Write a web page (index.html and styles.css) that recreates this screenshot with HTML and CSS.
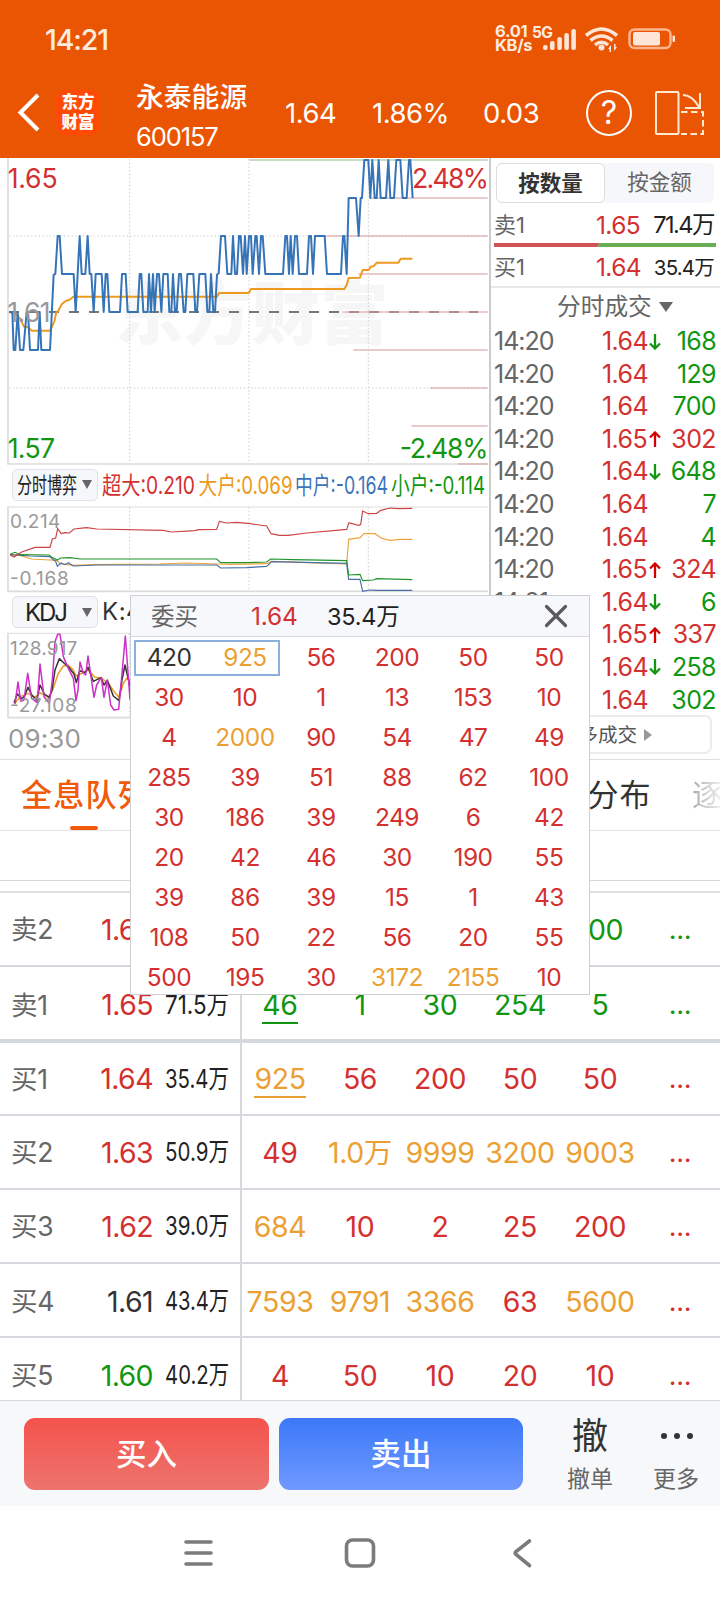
FILE: index.html
```html
<!DOCTYPE html>
<html lang="zh-CN">
<head>
<meta charset="utf-8">
<title>永泰能源 600157</title>
<link rel="stylesheet" href="styles.css">
</head>
<body>
<div class="app">
  <header class="top">
    <div class="status">
      <span class="clock">14:21</span>
      <div class="net"><span>6.01</span><span>KB/s</span></div>
      <span class="gen">5G</span>
      <svg class="status-icons" width="134" height="32" viewBox="542 24 134 32" fill="#fde6d8">
        <rect x="543" y="45" width="4.6" height="5" rx="2"/><rect x="550" y="41" width="4.6" height="9" rx="2"/><rect x="557.300" y="37" width="4.600" height="13" rx="2"/><rect x="564.300" y="33" width="4.600" height="17" rx="2"/><rect x="571.300" y="29" width="4.600" height="21" rx="2"/>
        <g fill="none" stroke="#fde6d8" stroke-width="3.600"><path d="M586 35.500Q601.500 22.500 617 35.500"/><path d="M590.500 40.500Q601.500 31.500 612.500 40.500"/><path d="M595 45Q601.500 39.500 608 45"/></g>
        <circle cx="601.500" cy="47.500" r="3"/>
        <path d="M608 49l3-4v7h-1.500v-3zM617 47l-3 4v-7h1.500v3z"/>
        <rect x="629.500" y="29.500" width="41" height="18.500" rx="5" fill="none" stroke="#fbb48c" stroke-width="2.500"/>
        <rect x="633" y="32" width="27" height="13.500" rx="2"/><rect x="672.500" y="35.500" width="2.500" height="6.500" rx="1"/>
      </svg>
    </div>
    <div class="title">
      <svg class="back" width="24" height="40" viewBox="0 0 24 40"><path d="M21 3L3.500 20.500 21 38" fill="none" stroke="#fff" stroke-width="4"/></svg>
      <div class="logo"><span>东方</span><span>财富</span></div>
      <div class="stock"><span class="name">永泰能源</span><span class="code">600157</span></div>
      <span class="q q1">1.64</span><span class="q q2">1.86%</span><span class="q q3">0.03</span>
      <div class="help">?</div>
      <svg class="rotate" width="50" height="48" viewBox="654 89 50 48" fill="none" stroke="#ffe9cf" stroke-width="2">
        <rect x="656" y="92" width="22.500" height="42" rx="1"/><path d="M683 95Q692 95 699 107"/><path d="M700 93v15H685"/>
        <path d="M681 112h22v22H681" stroke-dasharray="6.500 3.500"/>
      </svg>
    </div>
  </header>

  <main class="market">
    <section class="charts">
      <svg class="chart" width="489" height="308" viewBox="0 24 1467 924">
        <g class="mark"><text x="345" y="568" textLength="820">东方财富</text></g>
        <g class="dots"><path d="M27 258H1464M27 714H1464"/><path d="M389 27V940M747 27V940M1105 27V940"/></g>
        <path class="frame" d="M24 24V942H1464"/>
        <path class="axis" d="M27 486H1434" stroke-dasharray="30 30"/>
        <g class="levels"><path d="M1108 144H1463M974 258H1463M1075 372H1463M1028 486H1463M1060 600H1463M1290 714H1463M1234 828H1463M1374 942H1463"/></g>
        <path class="top-level" d="M747 30H1463"/>
        <polyline class="ln avg" points="27,486 45,490 60,505 72,530 85,532 95,542 150,542 163,515 168,490 175,482 185,463 198,452 208,450 220,440 651,440 657,429 746,429 753,417 1033,417 1040,405 1046,384 1080,383 1088,360 1106,360 1112,350 1122,348 1130,338 1195,338 1202,326 1237,326"/>
        <polyline class="ln price" points="27,486 37,486 41,600 46,600 53,486 60,600 70,600 80,486 84,486 90,600 114,600 119,486 124,600 150,600 161,374 166,372 173,258 179,258 186,372 221,372 227,486 239,258 245,372 256,372 263,258 269,372 274,372 281,486 287,372 305,372 311,486 317,372 322,372 328,486 360,486 366,372 377,372 383,486 413,486 419,372 424,372 430,486 443,486 447,372 453,486 459,372 464,486 471,372 477,372 484,486 490,372 503,372 508,486 514,486 519,372 525,486 530,486 537,372 543,372 551,486 556,486 562,372 580,372 586,486 591,486 598,372 616,372 622,486 628,486 633,372 640,486 645,486 651,374 656,370 663,258 675,258 682,372 694,372 699,258 705,372 711,372 717,258 722,258 729,372 735,258 740,372 747,258 753,258 758,372 766,258 770,258 777,372 783,258 788,258 796,372 849,372 856,258 861,258 867,372 872,258 878,372 885,258 891,258 897,372 921,372 927,258 933,258 939,372 945,258 974,258 981,372 1023,372 1029,258 1033,258 1040,372 1046,144 1068,144 1076,258 1082,144 1086,144 1093,30 1105,30 1111,144 1117,30 1124,144 1130,144 1136,30 1142,144 1158,144 1165,30 1171,144 1182,144 1189,30 1201,30 1208,144 1220,144 1227,30 1231,30 1238,144"/>
        <g class="big-label">
          <text class="red" x="23" y="113" textLength="150">1.65</text><text class="grey" x="22" y="515" textLength="130">1.61</text><text class="green" x="23" y="923" textLength="142">1.57</text>
          <text class="red" x="1236" y="113" textLength="231">2.48%</text><text class="green" x="1199" y="923" textLength="266">-2.48%</text>
        </g>
      </svg>
      <div class="tools">
        <div class="pick"><svg width="86" height="32" viewBox="12 469 86 32"><text x="17" y="493" textLength="60" lengthAdjust="spacingAndGlyphs">分时博弈</text><path d="M82 480h10l-5 9z"/></svg></div>
        <svg class="legend" width="386" height="32" viewBox="101 469 386 32">
          <text class="red" x="102" y="494" textLength="93" lengthAdjust="spacingAndGlyphs">超大:0.210</text>
          <text class="orange" x="198.500" y="494" textLength="94" lengthAdjust="spacingAndGlyphs">大户:0.069</text>
          <text class="blue" x="295" y="494" textLength="93" lengthAdjust="spacingAndGlyphs">中户:-0.164</text>
          <text class="green" x="391" y="494" textLength="94" lengthAdjust="spacingAndGlyphs">小户:-0.114</text>
        </svg>
      </div>
      <svg class="chart" width="489" height="87" viewBox="0 137 1467 261">
        <path class="frame thin" d="M24 140H1464"/><path class="frame" d="M24 138V393H1464"/>
        <g class="dots"><path d="M389 140V392M747 140V392M1105 140V392"/></g>
        <g class="small-label"><text x="30" y="203" textLength="151">0.214</text><text x="30" y="375" textLength="176">-0.168</text></g>
        <polyline class="hair s-orange" points="30,283 60,285 95,296 150,299 172,301 180,310 220,315 280,313 480,311 560,308 650,311 690,312 800,310 815,303 900,306 1040,311 1046,237 1080,232 1092,220 1125,220 1145,234 1170,240 1200,237 1237,237"/>
        <polyline class="hair s-blue" points="30,283 90,287 150,289 158,297 167,303 172,318 183,308 195,313 205,307 220,317 290,314 650,314 662,323 740,322 800,318 815,304 1040,309 1046,357 1080,357 1088,393 1110,389 1130,390 1237,390"/>
        <polyline class="hair s-green" points="30,282 45,276 60,283 148,284 156,291 172,299 182,293 210,292 240,296 650,296 662,307 735,307 800,305 812,296 880,298 1040,301 1046,344 1080,342 1088,361 1120,359 1130,355 1237,358"/>
        <polyline class="hair s-red" points="30,283 42,290 65,275 105,261 150,261 157,236 167,233 173,205 184,220 195,217 208,218 222,206 260,202 290,206 490,210 515,215 585,211 595,208 650,207 658,183 680,188 710,186 750,190 800,197 813,220 838,225 865,225 920,218 1040,207 1047,187 1075,195 1082,193 1088,152 1105,160 1130,159 1142,150 1170,143 1195,145 1237,144"/>
      </svg>
      <div class="tools second">
        <div class="pick kdj"><svg width="86" height="32" viewBox="12 596 86 32"><text x="25" y="621" textLength="43">KDJ</text><path d="M82 608h10l-5 9z"/></svg></div>
        <span class="kval">K:48.5</span>
      </div>
      <svg class="chart" width="489" height="88" viewBox="0 516 1467 264">
        <path class="frame thin" d="M24 520H1464"/><path class="frame" d="M24 518V773H1464"/>
        <g class="dots"><path d="M389 520V772"/></g>
        <polyline class="ln k1" points="45,730 60,710 85,700 105,712 120,698 145,712 158,690 175,640 190,618 205,616 220,630 228,648 240,642 265,630 285,652 305,655 325,670 345,698 357,712 370,670 380,655 391,662"/>
        <polyline class="ln k2" points="42,728 52,702 65,716 74,708 84,682 96,706 110,720 120,675 133,702 148,712 156,690 165,630 178,596 195,612 205,620 222,642 229,668 239,632 256,638 264,622 280,664 303,653 312,675 322,661 340,708 357,722 366,660 375,615 390,680"/>
        <polyline class="ln k3" points="45,732 54,666 62,724 72,720 83,640 95,715 112,728 120,612 132,710 148,730 157,660 165,545 173,523 180,523 190,590 205,625 220,655 228,722 234,690 240,606 250,640 257,645 264,588 282,712 290,675 304,652 312,712 322,660 332,735 342,750 356,748 366,640 376,528 390,718"/>
        <g class="small-label"><text x="30" y="584" textLength="202">128.917</text><text x="30" y="755" textLength="200">-27.108</text></g>
      </svg>
      <div class="start">09:30</div>
    </section>

    <aside class="side">
      <div class="switch"><span class="on">按数量</span><span>按金额</span></div>
      <div class="quote"><span class="lb">卖1</span><span class="pr">1.65</span><span class="vl">71.4万</span></div>
      <svg class="ratio" width="222" height="5"><path d="M0 0h106l-3 4H0z" fill="#d05353"/><path d="M106 0h116v4H103z" fill="#68ae55"/></svg>
      <div class="quote bid"><span class="lb">买1</span><span class="pr">1.64</span><span class="vl sm">35.4万</span></div>
      <div class="ticks-head">分时成交<i class="tri"></i></div>
      <div class="ticks">
        <div class="tick"><span>14:20</span><b>1.64</b><svg viewBox="0 0 12 16"><path class="dn" d="M6 0v14.500M1 9.500L6 14.500l5-5"/></svg><em class="green">168</em></div>
        <div class="tick"><span>14:20</span><b>1.64</b><em class="green">129</em></div>
        <div class="tick"><span>14:20</span><b>1.64</b><em class="green">700</em></div>
        <div class="tick"><span>14:20</span><b>1.65</b><svg viewBox="0 0 12 16"><path class="up" d="M6 16V1.500M1 6.500L6 1.500l5 5"/></svg><em class="red">302</em></div>
        <div class="tick"><span>14:20</span><b>1.64</b><svg viewBox="0 0 12 16"><path class="dn" d="M6 0v14.500M1 9.500L6 14.500l5-5"/></svg><em class="green">648</em></div>
        <div class="tick"><span>14:20</span><b>1.64</b><em class="green">7</em></div>
        <div class="tick"><span>14:20</span><b>1.64</b><em class="green">4</em></div>
        <div class="tick"><span>14:20</span><b>1.65</b><svg viewBox="0 0 12 16"><path class="up" d="M6 16V1.500M1 6.500L6 1.500l5 5"/></svg><em class="red">324</em></div>
        <div class="tick"><span>14:21</span><b>1.64</b><svg viewBox="0 0 12 16"><path class="dn" d="M6 0v14.500M1 9.500L6 14.500l5-5"/></svg><em class="green">6</em></div>
        <div class="tick"><span>14:21</span><b>1.65</b><svg viewBox="0 0 12 16"><path class="up" d="M6 16V1.500M1 6.500L6 1.500l5 5"/></svg><em class="red">337</em></div>
        <div class="tick"><span>14:21</span><b>1.64</b><svg viewBox="0 0 12 16"><path class="dn" d="M6 0v14.500M1 9.500L6 14.500l5-5"/></svg><em class="green">258</em></div>
        <div class="tick"><span>14:21</span><b>1.64</b><em class="green">302</em></div>
      </div>
      <div class="more-ticks">更多成交<i class="tri-r"></i></div>
    </aside>
  </main>

  <nav class="tabs"><span class="tab active">全息队列</span><span class="tab mid">成交分布</span><span class="tab last">逐</span></nav>
  <div class="gap-a"></div>
  <div class="gap-b"></div>

  <section class="book">
    <div class="row"><span class="lb">卖2</span><span class="pr red">1.66</span><span class="vo"></span><div class="cells green"><i></i><i></i><i></i><i></i><i>100</i><i class="el">...</i></div></div>
    <div class="row thick"><span class="lb">卖1</span><span class="pr red">1.65</span><svg class="vo"><text x="0" y="23" textLength="64" lengthAdjust="spacingAndGlyphs">71.5万</text></svg><div class="cells green"><i><u>46</u></i><i>1</i><i>30</i><i>254</i><i>5</i><i class="el">...</i></div></div>
    <div class="row first-bid"><span class="lb">买1</span><span class="pr red">1.64</span><svg class="vo"><text x="0" y="23" textLength="64" lengthAdjust="spacingAndGlyphs">35.4万</text></svg><div class="cells red"><i class="amber"><u>925</u></i><i>56</i><i>200</i><i>50</i><i>50</i><i class="el">...</i></div></div>
    <div class="row"><span class="lb">买2</span><span class="pr red">1.63</span><svg class="vo"><text x="0" y="23" textLength="64" lengthAdjust="spacingAndGlyphs">50.9万</text></svg><div class="cells red"><i>49</i><i class="amber">1.0万</i><i class="amber">9999</i><i class="amber">3200</i><i class="amber">9003</i><i class="el">...</i></div></div>
    <div class="row"><span class="lb">买3</span><span class="pr red">1.62</span><svg class="vo"><text x="0" y="23" textLength="64" lengthAdjust="spacingAndGlyphs">39.0万</text></svg><div class="cells red"><i class="amber">684</i><i>10</i><i>2</i><i>25</i><i>200</i><i class="el">...</i></div></div>
    <div class="row low"><span class="lb">买4</span><span class="pr">1.61</span><svg class="vo"><text x="0" y="23" textLength="64" lengthAdjust="spacingAndGlyphs">43.4万</text></svg><div class="cells red"><i class="amber">7593</i><i class="amber">9791</i><i class="amber">3366</i><i>63</i><i class="amber">5600</i><i class="el">...</i></div></div>
    <div class="row low"><span class="lb">买5</span><span class="pr green">1.60</span><svg class="vo"><text x="0" y="23" textLength="64" lengthAdjust="spacingAndGlyphs">40.2万</text></svg><div class="cells red"><i>4</i><i>50</i><i>10</i><i>20</i><i>10</i><i class="el">...</i></div></div>
  </section>

  <footer class="actions">
    <button class="buy">买入</button><button class="sell">卖出</button>
    <div class="act cancel"><span class="glyph">撤</span><span>撤单</span></div>
    <div class="act other"><svg width="34" height="40" viewBox="0 0 34 40" fill="#333"><circle cx="5" cy="20" r="3"/><circle cx="18" cy="20" r="3"/><circle cx="31" cy="20" r="3"/></svg><span>更多</span></div>
  </footer>
  <div class="sysnav">
    <svg width="720" height="94" viewBox="0 1506 720 94" fill="none" stroke="#7b7b7b" stroke-width="3.600" stroke-linecap="round">
      <path d="M186 1542h25M186 1553h25M186 1564h25"/><rect x="346.500" y="1540" width="27" height="26" rx="6"/><path d="M529.500 1541L516 1551.500Q514.500 1553 516 1554.500L529.500 1565.500"/>
    </svg>
  </div>

  <div class="popup">
    <div class="pop-head"><span class="side-name">委买</span><span class="pop-price">1.64</span><span class="pop-vol">35.4万</span>
      <svg width="24" height="24" viewBox="0 0 24 24"><path d="M2.500 2.500l19 19M21.500 2.500l-19 19" stroke="#5a5a5a" stroke-width="3.200" stroke-linecap="round"/></svg></div>
    <div class="grid">
      <span class="dark">420</span><span class="amber">925</span><span>56</span><span>200</span><span>50</span><span>50</span>
      <span>30</span><span>10</span><span>1</span><span>13</span><span>153</span><span>10</span>
      <span>4</span><span class="amber">2000</span><span>90</span><span>54</span><span>47</span><span>49</span>
      <span>285</span><span>39</span><span>51</span><span>88</span><span>62</span><span>100</span>
      <span>30</span><span>186</span><span>39</span><span>249</span><span>6</span><span>42</span>
      <span>20</span><span>42</span><span>46</span><span>30</span><span>190</span><span>55</span>
      <span>39</span><span>86</span><span>39</span><span>15</span><span>1</span><span>43</span>
      <span>108</span><span>50</span><span>22</span><span>56</span><span>20</span><span>55</span>
      <span>500</span><span>195</span><span>30</span><span class="amber">3172</span><span class="amber">2155</span><span>10</span>
    </div>
    <div class="selected"></div>
  </div>
</div>
</body>
</html>
```
FILE: styles.css
```css
* { box-sizing: border-box; }
body { margin: 0; background: #fff; }
.app { position: relative; width: 720px; height: 1600px; overflow: hidden; display: flex; flex-direction: column; font-family: Inter, "Noto Sans CJK SC", sans-serif; color: #333; background: #fff; }
svg { display: block; flex: none; }
span, i, b, em { font-style: normal; white-space: nowrap; }
.red { color: #d33030; fill: #d33030; }
.green { color: #119611; fill: #119611; }
.orange { fill: #ec9a20; }
.blue { fill: #3b74b9; }
.grey { fill: #999; }

.top { height: 158px; flex: none; background: #ea5504; color: #fff; }
.status { height: 76px; display: flex; padding: 24px 0 0 45px; color: #fdeadf; }
.clock { width: 450px; font-size: 28.500px; line-height: 31px; font-weight: 500; letter-spacing: -1.100px; }
.net { width: 37px; display: flex; flex-direction: column; font-size: 16.500px; line-height: 14px; font-weight: 700; letter-spacing: -.3px; }
.gen { width: 10px; font-size: 15.500px; line-height: 17px; font-weight: 700; letter-spacing: -.7px; }
.title { height: 82px; display: flex; align-items: flex-start; }
.back { margin: 16px 0 0 17px; }
.logo { width: 44px; height: 45px; margin: 14px 0 0 15px; border-radius: 9px; background: #ff4a05; display: flex; flex-direction: column; align-items: center; padding-top: 2px; font-size: 16.500px; line-height: 20px; font-weight: 900; }
.stock { width: 149px; margin-left: 36px; padding-top: 1px; display: flex; flex-direction: column; }
.name { font-size: 27.800px; line-height: 40px; font-weight: 500; }
.code { font-size: 25.500px; line-height: 39px; letter-spacing: -1.100px; }
.q { font-size: 27.500px; line-height: 75px; letter-spacing: -.5px; }
.q1 { width: 87px; } .q2 { width: 111px; } .q3 { width: 103px; }
.help { width: 46px; height: 46px; margin: 14px 22px 0 0; border: 2px solid #fff; border-radius: 50%; font-size: 32px; line-height: 42px; text-align: center; }
.rotate { margin-top: 13px; }

.market { display: flex; height: 602px; flex: none; border-bottom: 1px solid #dedfe1; }
.charts { width: 489px; flex: none; }
.dots path { fill: none; stroke: #d2d2d2; stroke-width: 3; stroke-dasharray: 5 6; }
.frame { fill: none; stroke: #dcdcdc; stroke-width: 5; }
.frame.thin { stroke-width: 3; }
.axis { stroke: #777; stroke-width: 6; }
.levels path { stroke: #d9a0a0; stroke-opacity: .55; stroke-width: 6; }
.top-level { stroke: #c5dfc5; stroke-width: 6; }
.ln { fill: none; stroke-width: 6; stroke-linejoin: round; }
.avg, .k1 { stroke: #ec9a20; }
.price { stroke: #3674b8; }
.k1, .k2, .k3 { stroke-width: 4.500; }
.k2 { stroke: #333; } .k3 { stroke: #cc30c8; }
.hair { fill: none; stroke-width: 3.500; }
.s-red { stroke: #cc4444; } .s-orange { stroke: #eea43c; } .s-green { stroke: #21952c; } .s-blue { stroke: #4770a5; }
.mark text { font-size: 205px; font-weight: 900; fill: #f6f6f6; }
.big-label text { font-size: 80px; }
.small-label text { font-size: 57px; fill: #999; }
.tools { height: 40px; display: flex; padding: 3px 0 0 12px; }
.tools.second { height: 39px; }
.pick { width: 86px; height: 32px; border: 1px solid #dfe2e6; border-radius: 5px; background: #f5f7fa; flex: none; }
.pick svg { margin: -1px; fill: #222; }
.pick text { font-size: 22px; }
.pick.kdj text { font-size: 24px; }
.pick path { fill: #666; }
.legend { margin-left: 3px; font-size: 24px; overflow: visible; }
.kval { margin-left: 4px; font-size: 24px; line-height: 32px; letter-spacing: .5px; }
.start { padding-left: 8px; font-size: 26px; line-height: 37px; color: #999; letter-spacing: .1px; }

.side { width: 231px; border-left: 2px solid #ccc; padding-left: 3px; }
.switch { width: 218px; height: 40px; margin: 5px 0 0 2px; display: grid; grid-template-columns: 109px 109px; background: #f6f7fa; border-radius: 6px; font-size: 21.500px; line-height: 38px; text-align: center; color: #666; }
.switch .on { background: #fff; border: 1px solid #ddd; border-radius: 6px; font-weight: 700; color: #333; }
.quote { height: 40px; display: flex; align-items: center; line-height: 40px; padding-top: 3px; }
.quote .lb { width: 102px; font-size: 22px; color: #666; }
.quote .pr { width: 54px; font-size: 24.500px; letter-spacing: -.6px; color: #d33030; }
.quote .vl { width: 64px; font-size: 23.500px; letter-spacing: -1.500px; text-align: right; color: #222; }
.quote .vl.sm { font-size: 20.500px; letter-spacing: -.8px; }
.quote.bid { height: 38px; line-height: 35px; align-items: flex-start; padding-top: 2px; }
.ticks-head { height: 39px; margin-left: -3px; border-top: 2px solid #e7e7e9; display: flex; align-items: center; padding-left: 66px; font-size: 23.700px; line-height: 34px; color: #666; }
.tri { margin-left: 7px; border: 7px solid transparent; border-top: 10px solid #666; border-bottom: 0; }
.tick { height: 32.600px; display: grid; grid-template-columns: 108px 47px 14px 53px; align-items: center; font-size: 25px; line-height: 33px; }
.tick span { letter-spacing: -1px; color: #666; }
.tick b { font-weight: 400; letter-spacing: -.6px; color: #d33030; }
.tick svg { width: 12px; height: 16px; fill: none; stroke-width: 2.300; }
.tick em { grid-column: 4; text-align: right; letter-spacing: -.6px; }
.dn { stroke: #119611; } .up { stroke: #d20000; }
.more-ticks { width: 218px; height: 39px; margin-top: -1px; border: 2px solid #ececee; border-radius: 7px; display: flex; align-items: center; justify-content: flex-end; padding-right: 58px; font-size: 19.500px; line-height: 30px; color: #555; }
.tri-r { margin-left: 7px; border: 6px solid transparent; border-left: 8px solid #999; border-right: 0; }

.tabs { height: 71px; flex: none; display: flex; border-bottom: 1px solid #e3e4e6; font-size: 31px; line-height: 69px; position: relative; overflow: hidden; }
.tab { letter-spacing: 1.200px; flex: none; }
.active { width: 500px; padding-left: 21px; color: #f05a0a; font-weight: 500; position: relative; }
.active::after { content: ""; position: absolute; left: 70px; bottom: 0; width: 28px; height: 4px; border-radius: 2px; background: #f05a0a; }
.mid { width: 192px; padding-left: 23px; }
.last { color: transparent; background: linear-gradient(90deg, #aaa 0, #eee 28px, #fff 34px); background-clip: text; -webkit-background-clip: text; }
.gap-a { height: 50px; flex: none; border-bottom: 1px solid #d5d8dc; }
.gap-b { height: 12px; flex: none; border-bottom: 2px solid #dfe1e4; }

.book { height: 507px; flex: none; overflow: hidden; }
.row { height: 74px; display: flex; align-items: stretch; line-height: 73px; border-bottom: 2px solid #d5d8dc; }
.row.thick { border-bottom-width: 4px; height: 76px; line-height: 76px; }
.row.first-bid { height: 73px; line-height: 72px; }
.row.low { line-height: 75px; }
.row .lb { width: 92px; padding-left: 11px; font-size: 26.500px; letter-spacing: -.2px; color: #666; }
.row .pr { width: 61px; font-size: 28.500px; letter-spacing: -.6px; text-align: right; }
.row .vo { width: 64px; height: 30px; margin: 22px 11px 0 12px; font-size: 26px; fill: #222; overflow: visible; }
.thick .vo { margin-top: 24px; }
.low .vo { margin-top: 23px; }
.cells { width: 480px; display: grid; grid-template-columns: 78px repeat(5, 80px); border-left: 2px solid #d5d8dc; text-align: center; font-size: 28.500px; letter-spacing: -.4px; }
.cells i:first-child { padding-right: 2px; }
.amber { color: #eba034; }
.cells u { text-decoration: none; display: inline-block; line-height: 35px; border-bottom: 2px solid; }
.cells .el { font-size: 27px; letter-spacing: -.2px; }

.actions { height: 106px; flex: none; background: #f6f8fa; border-top: 1px solid #d5d8dc; display: flex; padding: 17px 0 0 24px; }
.actions button { height: 72px; border: 0; border-radius: 11px; padding: 0 0 4px; color: #fff; font: 500 30.500px "Noto Sans CJK SC", sans-serif; }
.buy { width: 245px; background: linear-gradient(#f4534c, #ed746e); }
.sell { width: 244px; margin-left: 10px; background: linear-gradient(#3b78f8, #7099ff); }
.act { display: flex; flex-direction: column; align-items: center; width: 86px; font-size: 23px; line-height: 32px; color: #666; }
.cancel { margin-left: 24px; }
.act .glyph { font-size: 36px; line-height: 37px; height: 45px; color: #333; }
.other svg { height: 40px; margin: -2px 0 7px; }
.sysnav { height: 94px; flex: none; }

.popup { position: absolute; left: 130px; top: 595px; width: 460px; height: 400px; border: 1px solid #cdd0d3; background: #fff; }
.pop-head { height: 41px; background: #f6f8fb; border-bottom: 1px solid #d5d8dc; display: flex; align-items: center; line-height: 41px; padding-left: 20px; }
.side-name { width: 100px; font-size: 23.500px; color: #666; }
.pop-price { width: 76px; font-size: 24.500px; letter-spacing: -.2px; color: #d33030; }
.pop-vol { width: 217px; font-size: 23.500px; letter-spacing: -.2px; color: #222; }
.grid { display: grid; grid-template-columns: repeat(6, 76px); grid-auto-rows: 40px; text-align: center; line-height: 41px; font-size: 24.500px; letter-spacing: -.5px; color: #d33030; }
.grid .dark { color: #333; }
.grid .amber { color: #eba034; }
.selected { position: absolute; left: 3px; top: 44px; width: 146px; height: 36px; border: 2px solid #8bb0dc; }
```
